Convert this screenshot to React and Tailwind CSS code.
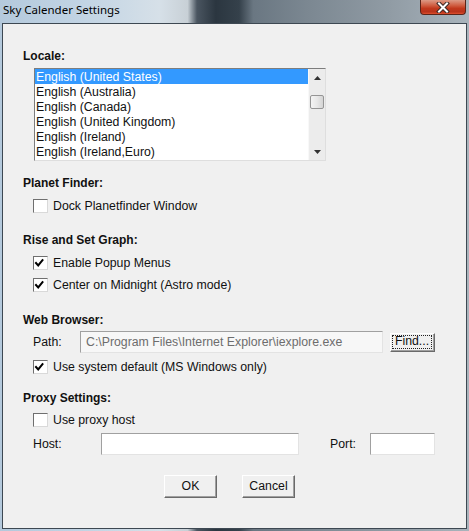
import React from 'react';

const locales = [
  'English (United States)',
  'English (Australia)',
  'English (Canada)',
  'English (United Kingdom)',
  'English (Ireland)',
  'English (Ireland,Euro)',
];

function SectionLabel({ children, className = '' }) {
  return (
    <div className={`h-[16px] leading-[16px] font-bold text-[12px] text-[#111] ${className}`}>
      {children}
    </div>
  );
}

function CheckBox({ label, checked, className = '' }) {
  return (
    <div className={`h-[16px] flex items-center ml-[10px] ${className}`}>
      <div className="w-[15px] h-[14px] bg-white border border-t-[#6f6f6f] border-l-[#6f6f6f] border-b-[#d9d9d9] border-r-[#d9d9d9] flex items-center justify-center">
        {checked && (
          <svg width="11" height="10" viewBox="0 0 11 10" className="-ml-[2px]">
            <path d="M2 5 L4.2 7.4 L8.5 2.2" fill="none" stroke="#000" strokeWidth="2" strokeLinecap="square" />
          </svg>
        )}
      </div>
      <span className="ml-[5px] text-[12.3px] leading-[16px] text-[#111]">{label}</span>
    </div>
  );
}

function ClassicButton({ children, className = '', focused = false }) {
  return (
    <div className={`bg-[#f0f0f0] border border-t-[#ffffff] border-l-[#ffffff] border-b-[#6a6a6a] border-r-[#6a6a6a] shadow-[inset_-1px_-1px_0_#a0a0a0] flex items-stretch text-[12.3px] text-[#111] ${className}`}>
      <div className={`flex-1 flex items-center justify-center ${focused ? 'm-[1px] mr-[2px] mb-[2px] border border-dotted border-[#222]' : ''}`}>
        {children}
      </div>
    </div>
  );
}

function Field({ className = '', children }) {
  return (
    <div className={`border border-t-[#a0a0a0] border-l-[#a0a0a0] border-b-[#e3e3e3] border-r-[#e3e3e3] ${className}`}>
      {children}
    </div>
  );
}

export default function App() {
  return (
    <div
      className="w-[469px] h-[531px] flex flex-col overflow-hidden"
      style={{ fontFamily: '"Liberation Sans", Arial, sans-serif' }}
    >
      <div className="w-full h-full flex flex-col bg-[linear-gradient(90deg,#b4c9dc_0%,#c2d4e4_18%,#d6e0e8_34%,#c8d0d6_40%,#4a5560_42%,#2b3640_46%,#35414b_51%,#6a7782_54%,#7c8892_66%,#8f9aa3_82%,#a9b4bc_100%)]">
        {/* title bar */}
        <div className="h-[23px] flex justify-between">
          <div
            className="pl-[3px] h-[20px] flex items-center text-[11.5px] text-black"
            style={{ fontFamily: '"Noto Sans", "Open Sans", sans-serif' }}
          >
            Sky Calender Settings
          </div>
          <div className="mr-[3px] w-[46px] h-[15px] rounded-b-[4px] border border-t-0 border-[#5b2418] bg-[linear-gradient(180deg,#dc9a86_0%,#cf5c40_40%,#c1391d_60%,#b8321a_85%,#e0502e_100%)] flex items-center justify-center">
            <svg width="14" height="11" viewBox="0 0 14 11">
              <path d="M3 1.5 L11 9.5 M11 1.5 L3 9.5" stroke="#3b2a28" strokeWidth="4" strokeLinecap="square" />
              <path d="M3 1.5 L11 9.5 M11 1.5 L3 9.5" stroke="#ffffff" strokeWidth="2" strokeLinecap="square" />
            </svg>
          </div>
        </div>

        {/* client area */}
        <div className="ml-[2px] mr-[2px] mb-[2px] flex-1 border border-[#3d4852] bg-[#f0f0f0] pl-[20px] flex flex-col">
          <SectionLabel className="mt-[24px]">Locale:</SectionLabel>

          <div className="mt-[4px] ml-[11px] w-[292px] h-[93px] bg-white border border-t-[#7d7d7d] border-l-[#7d7d7d] border-b-[#dedede] border-r-[#dedede] flex">
            <div className="flex-1 flex flex-col">
              {locales.map((name, i) => (
                <div
                  key={name}
                  className={`h-[15px] leading-[16px] pl-[1px] text-[12.3px] whitespace-nowrap ${i === 0 ? 'bg-[#3399ff] text-white' : 'text-[#111]'}`}
                >
                  {name}
                </div>
              ))}
            </div>
            <div className="w-[17px] bg-[#ececec] border-l border-[#f8f8f8] flex flex-col items-center">
              <div className="h-[17px] flex items-center justify-center">
                <svg width="7" height="4" viewBox="0 0 7 4">
                  <path d="M0 4 L3.5 0 L7 4 Z" fill="#333" />
                </svg>
              </div>
              <div className="mt-[9px] w-[14px] h-[14px] rounded-[2px] border border-[#959595] bg-[linear-gradient(90deg,#f4f4f4_0%,#e8e8e8_50%,#d4d4d4_100%)]" />
              <div className="flex-1" />
              <div className="h-[17px] flex items-center justify-center">
                <svg width="7" height="4" viewBox="0 0 7 4">
                  <path d="M0 0 L7 0 L3.5 4 Z" fill="#333" />
                </svg>
              </div>
            </div>
          </div>

          <SectionLabel className="mt-[14px]">Planet Finder:</SectionLabel>
          <CheckBox className="mt-[7px]" label="Dock Planetfinder Window" />

          <SectionLabel className="mt-[18px]">Rise and Set Graph:</SectionLabel>
          <CheckBox className="mt-[7px]" label="Enable Popup Menus" checked />
          <CheckBox className="mt-[6px]" label="Center on Midnight (Astro mode)" checked />

          <SectionLabel className="mt-[19px]">Web Browser:</SectionLabel>
          <div className="mt-[3px] ml-[10px] h-[22px] flex items-center">
            <span className="w-[47px] text-[12.3px] text-[#111]">Path:</span>
            <Field className="w-[303px] h-[22px] bg-[#f7f7f7] flex items-center pl-[5px]">
              <span className="text-[12.3px] text-[#6d6d6d] whitespace-nowrap">C:\Program Files\Internet Explorer\iexplore.exe</span>
            </Field>
            <ClassicButton focused className="ml-[7px] w-[45px] h-[19px]">Find...</ClassicButton>
          </div>
          <CheckBox className="mt-[6px]" label="Use system default (MS Windows only)" checked />

          <SectionLabel className="mt-[15px]">Proxy Settings:</SectionLabel>
          <CheckBox className="mt-[6px]" label="Use proxy host" />
          <div className="mt-[5px] ml-[10px] h-[22px] flex items-center">
            <span className="w-[68px] text-[12.3px] text-[#111]">Host:</span>
            <Field className="w-[198px] h-[22px] bg-white" />
            <span className="ml-[31px] w-[40px] text-[12.3px] text-[#111]">Port:</span>
            <Field className="w-[65px] h-[22px] bg-white" />
          </div>

          <div className="mt-[20px] ml-[141px] flex gap-[25px]">
            <ClassicButton className="w-[53px] h-[23px]">OK</ClassicButton>
            <ClassicButton className="w-[53px] h-[23px]">Cancel</ClassicButton>
          </div>
        </div>
      </div>
    </div>
  );
}
